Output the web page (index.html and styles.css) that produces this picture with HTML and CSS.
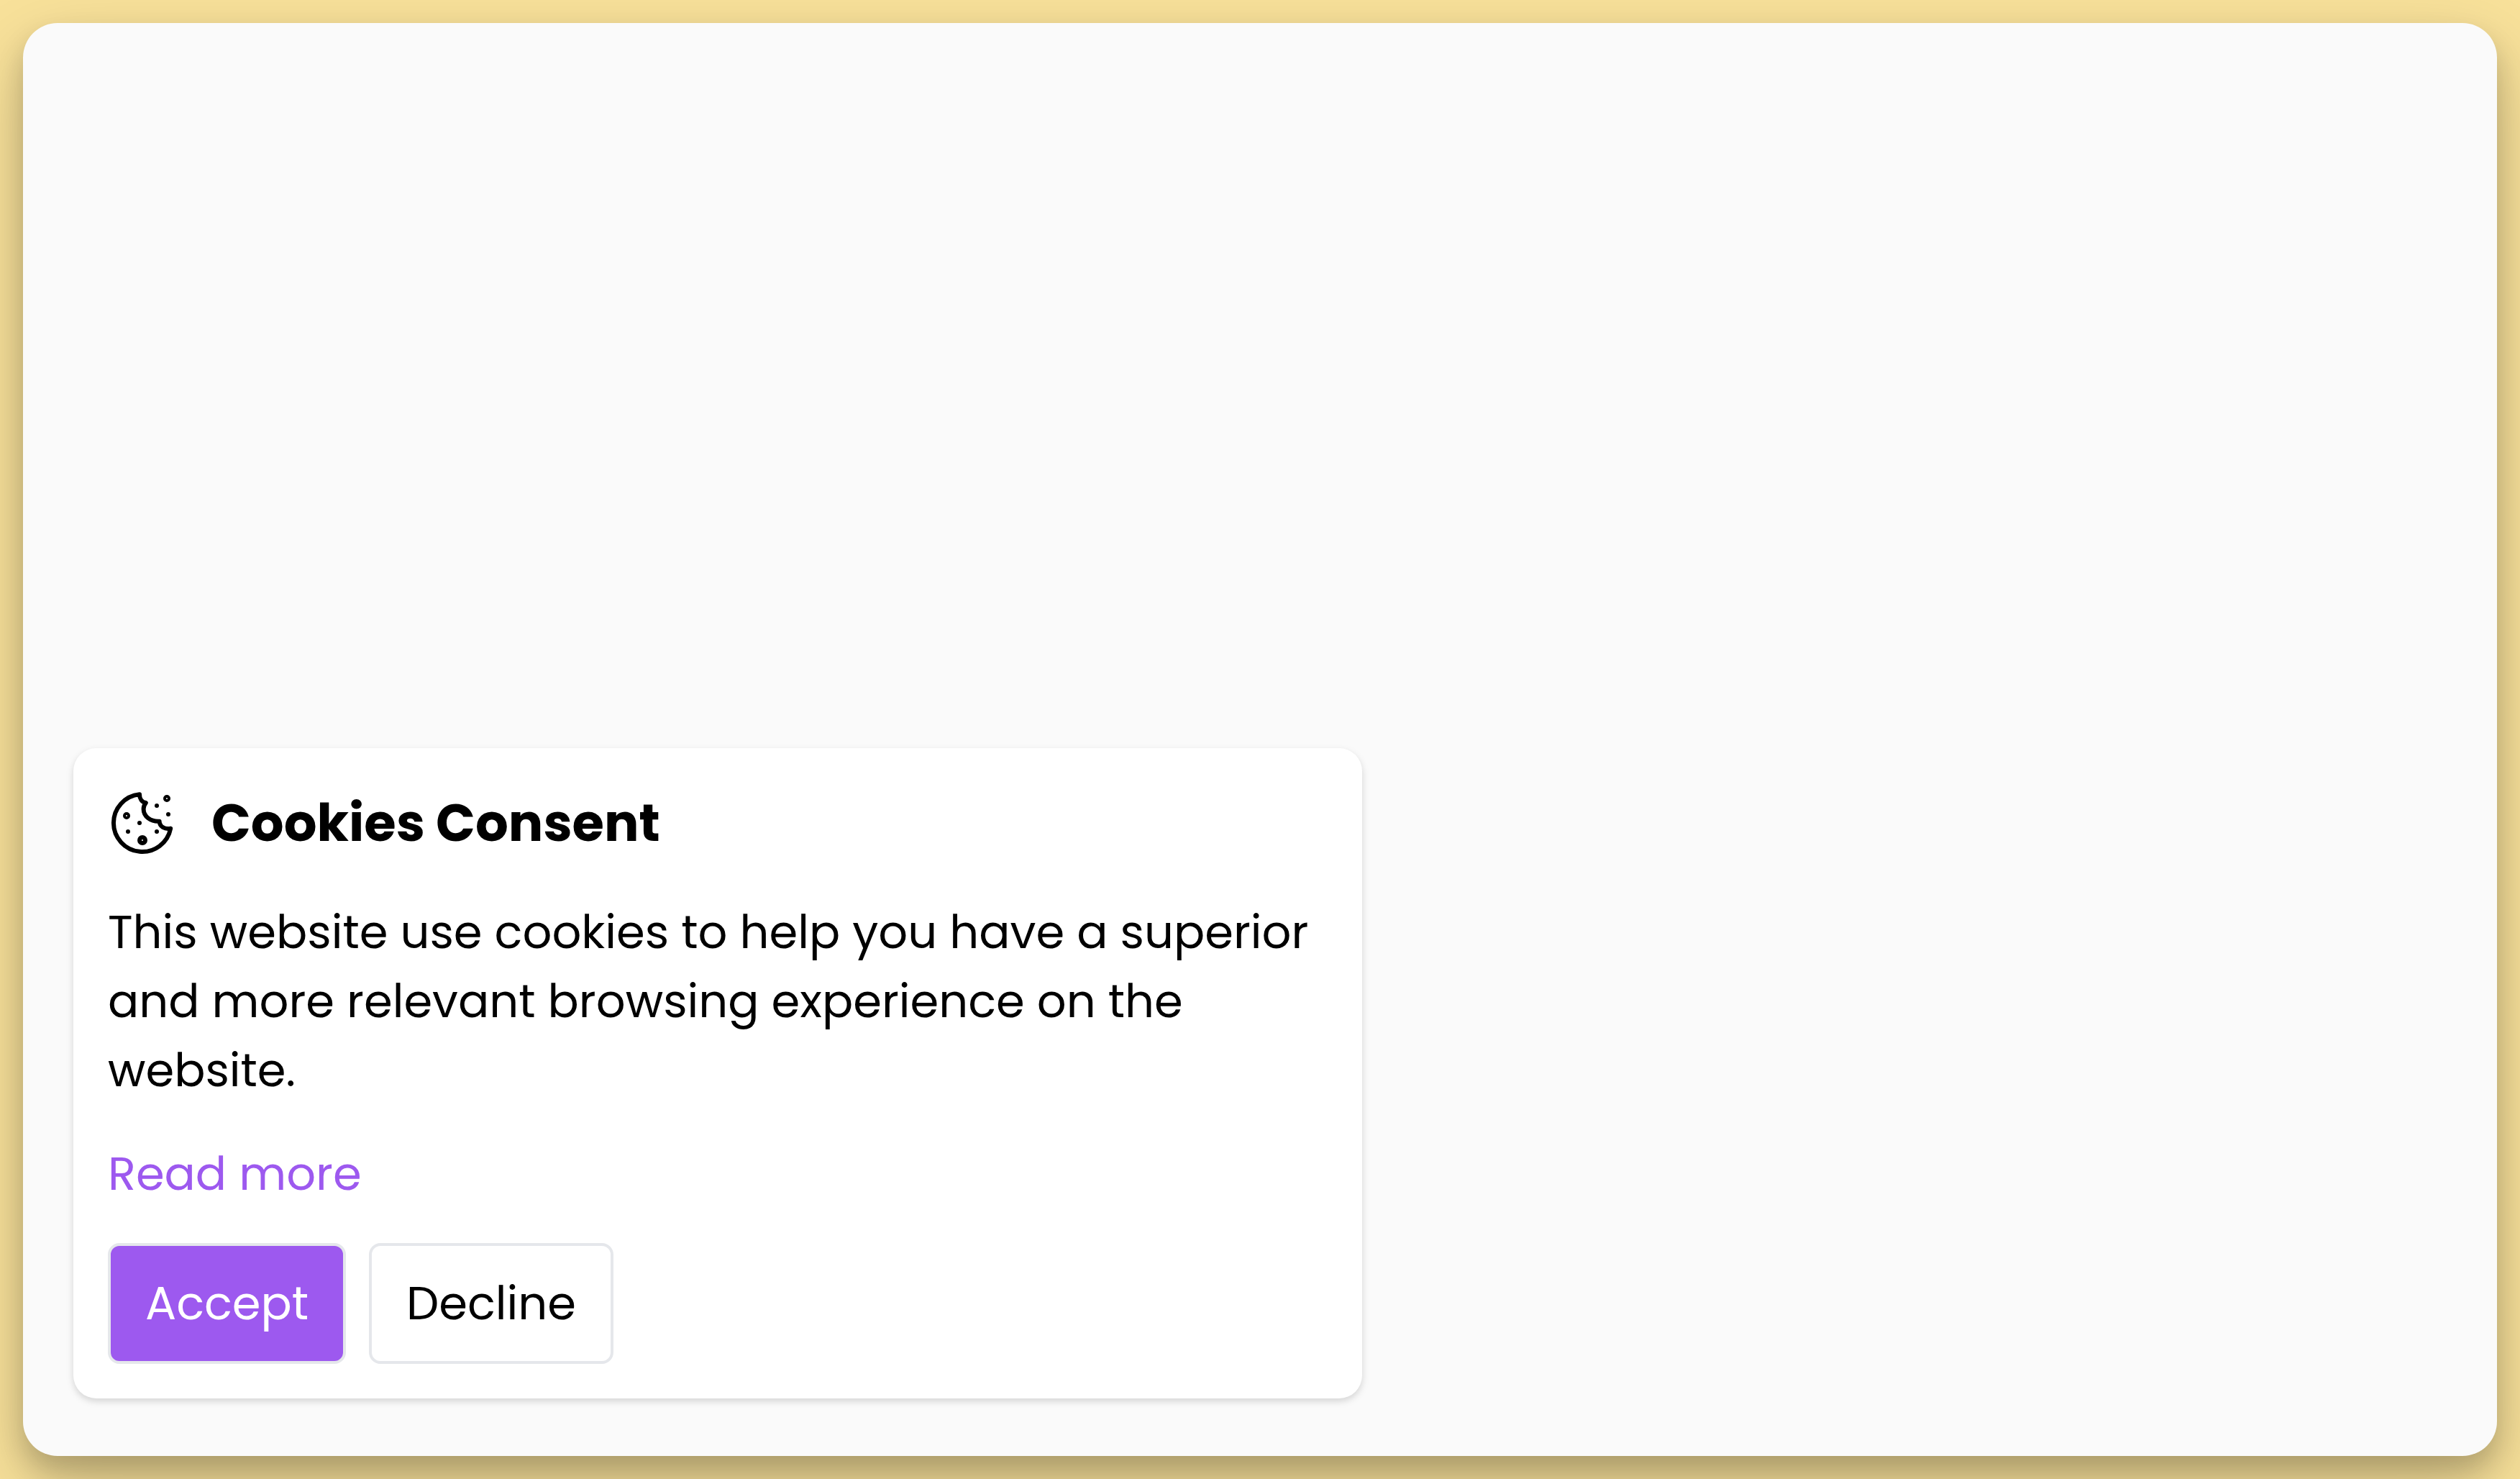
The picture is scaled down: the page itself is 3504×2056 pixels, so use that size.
FILE: index.html
```html
<!DOCTYPE html>
<html lang="en">
<head>
<meta charset="utf-8">
<meta name="viewport" content="width=device-width, initial-scale=1">
<title>Cookies Consent</title>
<link rel="stylesheet" href="styles.css">
</head>
<body>
<main class="panel">
  <section class="card" aria-labelledby="consent-title">
    <header class="card-head">
      <svg class="cookie" viewBox="0 0 24 24" fill="none" stroke="currentColor" stroke-width="1.5" stroke-linecap="round" stroke-linejoin="round" aria-hidden="true">
        <path d="M11 2.05A10 10 0 1 0 21.8 13.9C19.7 14.3 18 13.2 17.9 11.45C14.9 11.6 12.4 9.8 12.4 7.2C12.4 6.3 12.7 5.6 13.2 5C11.8 4.8 11 3.5 11 2.05Z"/>
        <circle cx="12" cy="18" r="1"/>
        <g stroke-width="1">
          <circle cx="6.5" cy="9.5" r=".75"/>
          <circle cx="20.5" cy="3.5" r=".75"/>
        </g>
        <g fill="currentColor" stroke="none">
          <circle cx="11" cy="12" r=".75"/>
          <circle cx="7" cy="15" r=".75"/>
          <circle cx="17" cy="15" r=".75"/>
          <circle cx="17" cy="6" r=".75"/>
          <circle cx="21" cy="9" r=".75"/>
        </g>
      </svg>
      <h1 class="title" id="consent-title">Cookies Consent</h1>
    </header>
    <p class="text">This website use cookies to help you have a superior and more relevant browsing experience on the website.</p>
    <a class="more" href="#">Read more</a>
    <div class="actions">
      <button class="btn btn-accept" type="button">Accept</button>
      <button class="btn btn-decline" type="button">Decline</button>
    </div>
  </section>
</main>
</body>
</html>
```

FILE: styles.css
```css
* {
  box-sizing: border-box;
}

body {
  margin: 0;
  min-height: 100vh;
  padding: 32px;
  display: flex;
  background: #f8e19a;
  color: #000;
  font-family: Poppins, Inter, sans-serif;
  font-size: 64px;
  line-height: 96px;
}

.panel {
  flex: 1;
  display: flex;
  align-items: flex-end;
  padding: 80px 70px;
  border-radius: 48px;
  background: #fafafa;
  box-shadow: 0 40px 100px rgba(0, 0, 0, .2), 0 20px 36px rgba(0, 0, 0, .17);
}

.card {
  width: 100%;
  max-width: 1792px;
  padding: 48px;
  display: flex;
  flex-direction: column;
  align-items: flex-start;
  gap: 48px;
  border-radius: 32px;
  background: #fff;
  box-shadow: 0 4px 12px rgba(0, 0, 0, .1), 0 4px 8px rgba(0, 0, 0, .06);
}

.card-head {
  display: flex;
  align-items: center;
  gap: 48px;
}

.cookie {
  width: 96px;
  height: 96px;
}

.title {
  margin: 0;
  font-size: 72px;
  font-weight: 700;
  line-height: 112px;
}

.text {
  margin: 0;
}

.more {
  color: #9d59ef;
  text-decoration: none;
}

.actions {
  display: flex;
  gap: 32px;
}

.btn {
  padding: 32px 48px;
  border: 4px solid #e5e7eb;
  border-radius: 16px;
  background: #fff;
  color: #000;
  font: inherit;
}

.btn-accept {
  background: #9d59ef;
  color: #fff;
}
```
